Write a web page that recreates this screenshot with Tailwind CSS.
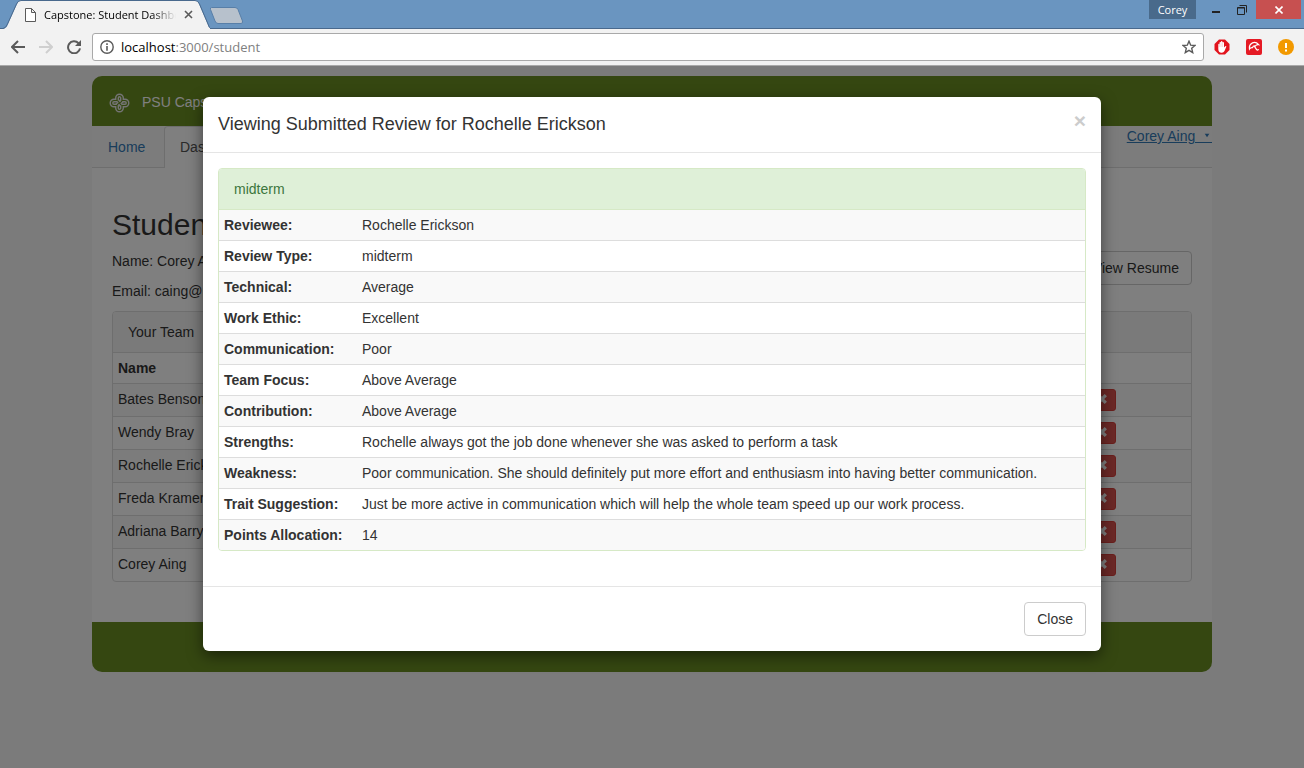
<!DOCTYPE html>
<html lang="en">
<head>
<meta charset="utf-8">
<meta name="viewport" content="width=device-width, initial-scale=1">
<title>Capstone: Student Dashboard</title>
<script src="https://cdn.jsdelivr.net/npm/@tailwindcss/browser@4"></script>
</head>
<body class="flex h-screen flex-col overflow-hidden bg-[#f6f6f6] font-['Liberation_Sans',Arial,sans-serif] text-sm leading-5 text-[#333]">

<!-- Browser window -->
<header class="shrink-0 border-b border-[#a9a9a9] bg-[#f2f2f2] font-['Open_Sans','Noto_Sans',sans-serif]">
  <div class="flex h-[29px] items-start border-b border-[#49698d] bg-[#6a95c0]">
    <div class="relative -mb-px h-[29px] w-[210px] shrink-0">
      <svg class="absolute inset-0" width="210" height="29" viewBox="0 0 210 29" aria-hidden="true"><path d="M3 29C6 28 7 27 8 24L17 4Q18.500 .5 21 .5H195Q198 .5 199 4L208 25Q209 28 211 29Z" fill="#f2f2f2"/><path d="M0 28.500H3Q6 28 7.500 24L16.500 4Q18 .5 21 .5H195Q198 .5 199.500 4L208 24Q209 28 211 28.500" fill="none" stroke="#49698d"/></svg>
      <div class="relative flex h-[29px] items-center pl-[25px] text-[11px] text-black">
        <svg class="mr-2 shrink-0" width="11" height="14" viewBox="0 0 11 14" fill="#fff" stroke="#5a5a5a" aria-hidden="true"><path d="M.5.5H6.500L10.500 4.500V13.500H.5ZM6.500.5V4.500H10.500"/></svg>
        <span class="w-[132px] overflow-hidden whitespace-nowrap [mask-image:linear-gradient(to_right,black_108px,transparent_132px)]">Capstone: Student Dashboard</span>
        <button class="ml-2" aria-label="Close tab"><svg width="9" height="9" viewBox="0 0 9 9" stroke="#5a5a5a" stroke-width="1.600"><path d="M1 1L8 8M8 1L1 8"/></svg></button>
      </div>
    </div>
    <button class="mt-[7px]" aria-label="New tab"><svg width="34" height="17" viewBox="0 0 34 17"><path d="M1.500.5H25Q27 .5 28 2.500L32.500 14Q33 16.500 31 16.500H8Q6 16.500 5 14L.5 2.500Q0 .5 1.500.5Z" fill="#b7c1cc" stroke="#587fa8"/></svg></button>
    <div class="flex-1"></div>
    <button class="h-[19px] w-[47px] bg-[#496a8b] text-[11px] leading-[18px] font-medium text-white">Corey</button>
    <button class="flex h-[19px] w-10 items-center justify-center" aria-label="Minimize"><svg width="8" height="9" viewBox="0 0 8 9"><path d="M0 6H8V8H0Z" fill="#222"/></svg></button>
    <button class="flex h-[19px] w-5 items-center" aria-label="Restore"><svg class="ml-px" width="10" height="10" viewBox="0 0 10 10" fill="none" stroke="#222"><path d="M.5 2.500H7.500V9.500H.5ZM.5 3H7.500M2.500.5H9.500V7.500"/></svg></button>
    <button class="mr-[3px] flex h-[19px] w-[45px] items-center justify-center bg-[#c75050]" aria-label="Close window"><svg width="8" height="8" viewBox="0 0 8 8" stroke="#fff" stroke-width="1.600"><path d="M.5.5L7.500 7.500M7.500.5L.5 7.500"/></svg></button>
  </div>
  <div class="flex h-9 items-center pr-[10px] pl-[11px]">
    <button aria-label="Back"><svg width="14" height="14" viewBox="0 0 14 14" fill="none" stroke="#5a5a5a" stroke-width="2"><path d="M14 7H1.500M7 1L1 7L7 13"/></svg></button>
    <button class="ml-[14px]" aria-label="Forward" disabled><svg width="14" height="14" viewBox="0 0 14 14" fill="none" stroke="#cfcfcf" stroke-width="2"><path d="M0 7H12.500M7 1L13 7L7 13"/></svg></button>
    <button class="ml-[14px]" aria-label="Reload"><svg width="14" height="14" viewBox="0 0 14 14"><path d="M11.500 3.200A6 6 0 1 0 13 8.300" fill="none" stroke="#5a5a5a" stroke-width="2"/><path d="M14 0V6H8Z" fill="#5a5a5a"/></svg></button>
    <div class="ml-[11px] flex h-7 flex-1 items-center rounded-[3px] border border-[#a9a9a9] bg-white pl-[7px] pr-[7px]">
      <svg class="shrink-0" width="14" height="14" viewBox="0 0 14 14" aria-hidden="true"><circle cx="7" cy="7" r="6.200" fill="none" stroke="#5a5a5a" stroke-width="1.400"/><path d="M6.200 3.300H7.800V4.900H6.200ZM6.200 6H7.800V10.700H6.200Z" fill="#5a5a5a"/></svg>
      <div class="ml-[7px] flex-1 text-[13px] text-[#808080]" role="textbox" aria-label="Address"><span class="text-black">localhost</span>:3000/student</div>
      <button aria-label="Bookmark"><svg width="14" height="14" viewBox="0 0 14 14" fill="none" stroke="#5a5a5a" stroke-width="1.400"><path d="M7 1.200L8.700 5.200L13 5.500L9.700 8.300L10.700 12.600L7 10.300L3.300 12.600L4.300 8.300L1 5.500L5.300 5.200Z"/></svg></button>
    </div>
    <button class="ml-[10px]" aria-label="Ad blocker"><svg width="16" height="16" viewBox="0 0 16 16"><path d="M5 .5H11L15.500 5V11L11 15.500H5L.5 11V5Z" fill="#e2131c"/><path d="M4.300 5.200Q4.900 4.200 5.500 5.200V3.500Q6.200 2.500 6.900 3.300V2.500Q7.700 1.600 8.400 2.500V3.200Q9.600 2.500 10 3.800V8.500L11.200 7.300Q12.700 6.500 12.200 8L10.500 12Q9.500 14 7.500 13.800Q4.300 13.500 4.300 10Z" fill="#fff"/><path d="M5.700 5V8M7.100 3.500V8M8.500 3.500V8" stroke="#f3a5a8" stroke-width=".4"/></svg></button>
    <button class="ml-4" aria-label="Antivirus"><svg width="16" height="16" viewBox="0 0 16 16"><rect width="16" height="16" rx="2" fill="#e51a24"/><path d="M3.500 10Q2.800 5.500 6.500 3.800Q10 2.600 12.600 5.600Q10.300 5.400 9.300 7Q7.300 6.400 6.500 8.600Q4.700 8.300 3.500 10ZM8.200 7L10.600 10.500Q11.600 11.600 12.800 10.400" fill="none" stroke="#fff" stroke-width="1.300"/></svg></button>
    <button class="ml-4" aria-label="Update required"><svg width="16" height="16" viewBox="0 0 16 16"><circle cx="8" cy="8" r="8" fill="#f29900"/><path d="M7 4H9V9H7ZM7 10.500H9V12.500H7Z" fill="#fff"/></svg></button>
  </div>
</header>

<div class="relative flex-1 overflow-hidden">
  <!-- Student page -->
  <div class="mx-auto mt-[10px] w-full max-w-[1120px]">
    <div class="flex h-[50px] items-center gap-3 rounded-t-[10px] bg-[#6b8e23] px-[17px] pt-[2px] text-white">
      <svg class="mt-[2px]" width="21" height="20" viewBox="0 0 21 20" fill="none" aria-hidden="true">
        <g stroke="#e8e8e8" stroke-width="4"><path d="M8 7.500V5a2.500 2.500 0 0 1 5 0V7.500C13 10 8 10 8 12.500V15a2.500 2.500 0 0 0 5 0V12.500"/><path d="M8 12.500H5a2.500 2.500 0 0 1 0-5H8C10.500 7.500 10.500 12.500 13 12.500H16a2.500 2.500 0 0 0 0-5H13"/></g>
        <g stroke="#6b8e23" stroke-width="1.200"><path d="M8 7.500V5a2.500 2.500 0 0 1 5 0V7.500C13 10 8 10 8 12.500V15a2.500 2.500 0 0 0 5 0V12.500"/><path d="M8 12.500H5a2.500 2.500 0 0 1 0-5H8C10.500 7.500 10.500 12.500 13 12.500H16a2.500 2.500 0 0 0 0-5H13"/></g>
      </svg>
      <span>PSU Capstone</span>
    </div>
    <nav class="flex h-[42px] items-start border-b border-[#ddd] bg-[#f8f8f8]">
      <a href="#" class="w-[72px] px-4 py-[11px] text-[#337ab7]">Home</a>
      <a href="#" class="h-[42px] rounded-t border border-b-0 border-[#ddd] bg-white px-[15px] py-[10px] text-[#555]">Dashboard</a>
      <a href="#" class="ml-auto text-[#337ab7] underline">Corey Aing&nbsp;&nbsp;<svg class="inline h-[14px] w-[9px] border-b border-[#337ab7] align-[-2px]" viewBox="0 0 9 14" aria-hidden="true"><path d="M1.500 5H6.500L4 9Z" fill="#337ab7"/></svg></a>
    </nav>
    <main class="bg-white px-5 pt-10 pb-10">
      <h2 class="text-[30px] leading-[33px]">Student Dashboard</h2>
      <div class="mt-[10px] flex items-start justify-between">
        <div>
          <p>Name: Corey Aing</p>
          <p class="mt-[10px]">Email: caing@pdx.edu</p>
        </div>
        <button class="h-[34px] rounded border border-[#ccc] bg-white px-3">View Resume</button>
      </div>
      <section class="mt-[10px] overflow-hidden rounded border border-[#ddd]">
        <h3 class="bg-[#f5f5f5] px-[15px] py-[10px]">Your Team</h3>
        <table class="w-full text-left">
          <thead><tr class="h-[31px] border-t border-[#ddd]"><th class="px-[5px]">Name</th><th></th></tr></thead>
          <tbody id="team"></tbody>
        </table>
      </section>
    </main>
    <footer class="h-[50px] rounded-b-[10px] bg-[#6b8e23]"></footer>
  </div>

  <!-- Review dialog -->
  <div class="absolute inset-0 bg-black/50 px-4 pt-[31px]">
    <div role="dialog" aria-modal="true" aria-labelledby="review-title" class="mx-auto w-full max-w-[898px] rounded-md bg-white shadow-[0_5px_15px_rgba(0,0,0,0.5)]">
      <div class="flex items-start justify-between border-b border-[#e5e5e5] p-[15px]">
        <h4 id="review-title" class="text-lg leading-[25px]">Viewing Submitted Review for Rochelle Erickson</h4>
        <button class="text-[21px] leading-[18px] font-bold text-[#ccc]" aria-label="Close">×</button>
      </div>
      <div class="px-[15px] pt-[15px] pb-[35px]">
        <section class="overflow-hidden rounded border border-[#d6e9c6]">
          <h3 class="bg-[#dff0d8] px-[15px] py-[10px] text-[#3c763d]">midterm</h3>
          <table class="w-full text-left"><tbody id="review"></tbody></table>
        </section>
      </div>
      <div class="flex justify-end border-t border-[#e5e5e5] p-[15px]">
        <button class="h-[34px] rounded border border-[#ccc] bg-white px-3">Close</button>
      </div>
    </div>
  </div>
</div>

<script>
const review = [
  ['Reviewee', 'Rochelle Erickson'],
  ['Review Type', 'midterm'],
  ['Technical', 'Average'],
  ['Work Ethic', 'Excellent'],
  ['Communication', 'Poor'],
  ['Team Focus', 'Above Average'],
  ['Contribution', 'Above Average'],
  ['Strengths', 'Rochelle always got the job done whenever she was asked to perform a task'],
  ['Weakness', 'Poor communication. She should definitely put more effort and enthusiasm into having better communication.'],
  ['Trait Suggestion', 'Just be more active in communication which will help the whole team speed up our work process.'],
  ['Points Allocation', '14'],
];
document.getElementById('review').innerHTML = review.map(([label, value]) => `
  <tr class="h-[31px] border-t border-[#ddd] odd:bg-[#f9f9f9] first:border-[#d6e9c6] last:h-[30px]">
    <th scope="row" class="w-[138px] px-[5px] whitespace-nowrap">${label}:</th>
    <td class="px-[5px]">${value}</td>
  </tr>`).join('');

const team = ['Bates Benson', 'Wendy Bray', 'Rochelle Erickson', 'Freda Kramer', 'Adriana Barry', 'Corey Aing'];
document.getElementById('team').innerHTML = team.map(name => `
  <tr class="h-[33px] border-t border-[#ddd] odd:bg-[#f9f9f9] last:h-[32px]">
    <td class="px-[5px] pb-[2px]">${name}</td>
    <td class="w-[103px]"><button class="flex h-[22px] w-7 items-center justify-center rounded-[3px] border border-[#d43f3a] bg-[#d9534f]" aria-label="Remove ${name}"><svg class="mb-[2px]" width="10" height="10" viewBox="0 0 10 10" stroke="#fff" stroke-width="3.200"><path d="M1.200 1.200L8.800 8.800M8.800 1.200L1.200 8.800"/></svg></button></td>
  </tr>`).join('');
</script>
</body>
</html>
